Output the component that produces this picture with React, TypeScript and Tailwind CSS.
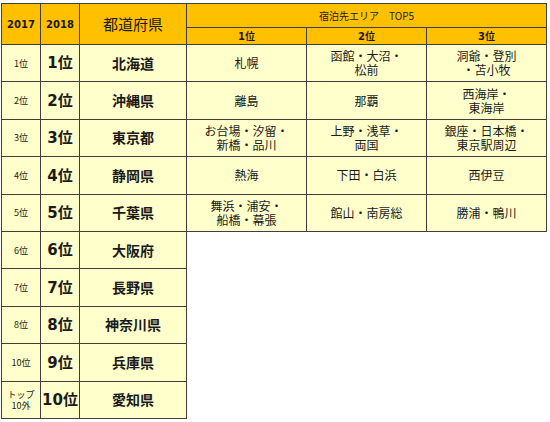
type Row = {
  prev: string
  rank: string
  pref: string
  areas?: string[]
}

const rows: Row[] = [
  { prev: "1位", rank: "1", pref: "北海道", areas: ["札幌", "函館・大沼・\n松前", "洞爺・登別\n・苫小牧"] },
  { prev: "2位", rank: "2", pref: "沖縄県", areas: ["離島", "那覇", "西海岸・\n東海岸"] },
  { prev: "3位", rank: "3", pref: "東京都", areas: ["お台場・汐留・\n新橋・品川", "上野・浅草・\n両国", "銀座・日本橋・\n東京駅周辺"] },
  { prev: "4位", rank: "4", pref: "静岡県", areas: ["熱海", "下田・白浜", "西伊豆"] },
  { prev: "5位", rank: "5", pref: "千葉県", areas: ["舞浜・浦安・\n船橋・幕張", "館山・南房総", "勝浦・鴨川"] },
  { prev: "6位", rank: "6", pref: "大阪府" },
  { prev: "7位", rank: "7", pref: "長野県" },
  { prev: "8位", rank: "8", pref: "神奈川県" },
  { prev: "10位", rank: "9", pref: "兵庫県" },
  { prev: "トップ\n10外", rank: "10", pref: "愛知県" },
]

const cell = "border border-[#3f3f3f] text-center align-middle p-0"
const num = "font-['DejaVu_Sans',sans-serif]"

export default function App() {
  return (
    <div className="w-[550px] h-[422px] bg-white pt-[3px] pl-[1px] font-['Noto_Sans_CJK_JP','DejaVu_Sans',sans-serif]">
      <table className="table-fixed border-collapse w-[545px] text-[#1a1a1a]">
        <colgroup>
          <col className="w-[39px]" />
          <col className="w-[39px]" />
          <col className="w-[107px]" />
          <col className="w-[120px]" />
          <col className="w-[120px]" />
          <col className="w-[120px]" />
        </colgroup>
        <thead className="bg-[#ffc000]">
          <tr className="h-[24px]">
            <th rowSpan={2} className={`${cell} ${num} text-[10px] font-bold`}>2017</th>
            <th rowSpan={2} className={`${cell} ${num} text-[10px] font-bold`}>2018</th>
            <th rowSpan={2} className={`${cell} text-[15px] font-normal`}>都道府県</th>
            <th colSpan={3} className={`${cell} text-[10px] font-normal`}>
              宿泊先エリア　TOP5
            </th>
          </tr>
          <tr className="h-[17px]">
            {["1", "2", "3"].map((n) => (
              <th key={n} className={`${cell} text-[10px] font-bold leading-none`}>
                <span className={num}>{n}</span>位
              </th>
            ))}
          </tr>
        </thead>
        <tbody>
          {rows.map((r) => (
            <tr key={r.pref} className="h-[37.4px]">
              <td className={`${cell} bg-[#ffffcc] text-[9px] leading-[11px] whitespace-pre-line`}>
                {r.prev}
              </td>
              <td className={`${cell} bg-[#ffffcc] text-[15px] font-bold whitespace-nowrap`}>
                <span className={num}>{r.rank}</span>位
              </td>
              <td className={`${cell} bg-[#ffffcc] text-[14px] font-bold whitespace-nowrap`}>
                {r.pref}
              </td>
              {r.areas?.map((a, i) => (
                <td
                  key={i}
                  className={`${cell} bg-[#ffffcc] text-[12px] leading-[14px] whitespace-pre-line`}
                >
                  {a}
                </td>
              ))}
            </tr>
          ))}
        </tbody>
      </table>
    </div>
  )
}
